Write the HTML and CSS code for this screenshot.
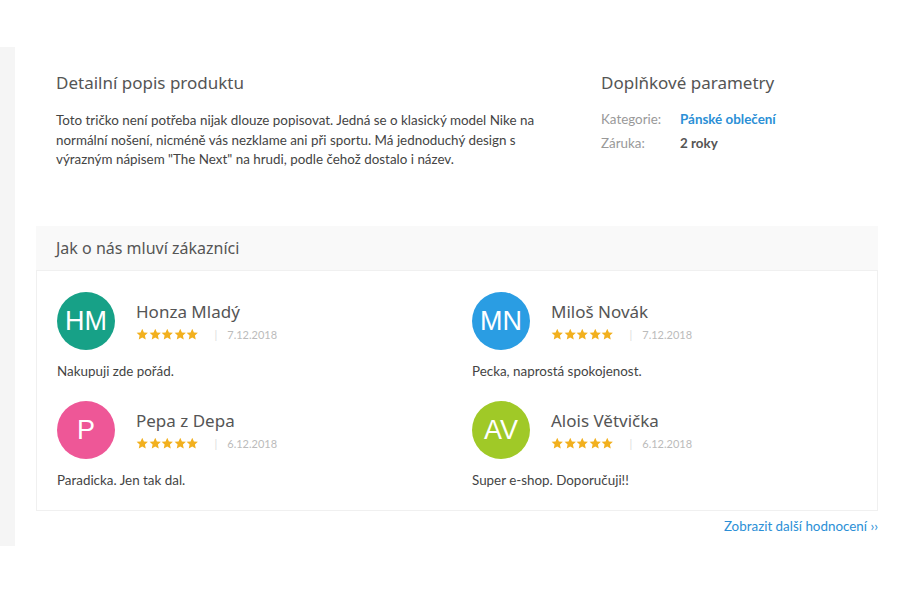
FILE: index.html
```html
<!doctype html>
<html lang="cs">
    <head>
        <meta charset="UTF-8" />
        <meta name="viewport" content="width=device-width, initial-scale=1.0" />
        <title>Detail produktu</title>
        <link rel="stylesheet" href="styles.css">
    </head>
    <body>
        <svg class="sprite" xmlns="http://www.w3.org/2000/svg">
            <symbol id="star" viewBox="0 0 24 24">
                <path d="M12 1.5l3.2 7 7.6.8-5.7 5.1 1.6 7.5L12 18l-6.7 3.9 1.6-7.5L1.2 9.3l7.6-.8z" />
            </symbol>
        </svg>

        <div class="page">
            <div class="sidebar"></div>

            <main class="content">
                <!-- Product description -->
                <section class="details">
                    <div class="description">
                        <h2>Detailní popis produktu</h2>
                        <p>
                            Toto tričko není potřeba nijak dlouze popisovat. Jedná se o klasický model Nike na
                            normální nošení, nicméně vás nezklame ani při sportu. Má jednoduchý design s
                            výrazným nápisem "The Next" na hrudi, podle čehož dostalo i název.
                        </p>
                    </div>

                    <div class="params">
                        <h2>Doplňkové parametry</h2>
                        <dl>
                            <dt>Kategorie:</dt>
                            <dd><a href="#">Pánské oblečení</a></dd>
                            <dt>Záruka:</dt>
                            <dd>2 roky</dd>
                        </dl>
                    </div>
                </section>

                <!-- Reviews -->
                <section class="reviews">
                    <div class="reviews-head">Jak o nás mluví zákazníci</div>
                    <div class="reviews-body">
                        <div class="review">
                            <div class="review-top">
                                <div class="avatar teal">HM</div>
                                <div class="meta">
                                    <div class="name">Honza Mladý</div>
                                    <div class="rating">
                                        <span class="stars"><svg><use href="#star" /></svg><svg><use href="#star" /></svg><svg><use href="#star" /></svg><svg><use href="#star" /></svg><svg><use href="#star" /></svg></span>
                                        <span class="sep">|</span>
                                        <span class="date">7.12.2018</span>
                                    </div>
                                </div>
                            </div>
                            <p>Nakupuji zde pořád.</p>
                        </div>

                        <div class="review">
                            <div class="review-top">
                                <div class="avatar blue">MN</div>
                                <div class="meta">
                                    <div class="name">Miloš Novák</div>
                                    <div class="rating">
                                        <span class="stars"><svg><use href="#star" /></svg><svg><use href="#star" /></svg><svg><use href="#star" /></svg><svg><use href="#star" /></svg><svg><use href="#star" /></svg></span>
                                        <span class="sep">|</span>
                                        <span class="date">7.12.2018</span>
                                    </div>
                                </div>
                            </div>
                            <p>Pecka, naprostá spokojenost.</p>
                        </div>

                        <div class="review">
                            <div class="review-top">
                                <div class="avatar pink">P</div>
                                <div class="meta">
                                    <div class="name">Pepa z Depa</div>
                                    <div class="rating">
                                        <span class="stars"><svg><use href="#star" /></svg><svg><use href="#star" /></svg><svg><use href="#star" /></svg><svg><use href="#star" /></svg><svg><use href="#star" /></svg></span>
                                        <span class="sep">|</span>
                                        <span class="date">6.12.2018</span>
                                    </div>
                                </div>
                            </div>
                            <p>Paradicka. Jen tak dal.</p>
                        </div>

                        <div class="review">
                            <div class="review-top">
                                <div class="avatar lime">AV</div>
                                <div class="meta">
                                    <div class="name">Alois Větvička</div>
                                    <div class="rating">
                                        <span class="stars"><svg><use href="#star" /></svg><svg><use href="#star" /></svg><svg><use href="#star" /></svg><svg><use href="#star" /></svg><svg><use href="#star" /></svg></span>
                                        <span class="sep">|</span>
                                        <span class="date">6.12.2018</span>
                                    </div>
                                </div>
                            </div>
                            <p>Super e-shop. Doporučuji!!</p>
                        </div>
                    </div>
                    <div class="more">
                        <a href="#">Zobrazit další hodnocení ››</a>
                    </div>
                </section>
            </main>
        </div>
    </body>
</html>
```

FILE: styles.css
```css
body {
    margin: 0;
    padding: 0;
    background-color: #fff;
    font-family: Lato, "Open Sans", sans-serif;
    color: #444;
}

.sprite {
    display: none;
}

.page {
    display: flex;
    margin-top: 47px;
}

/* Grey strip on the left edge */
.sidebar {
    width: 15px;
    height: 499px;
    background-color: #f5f5f5;
}

.content {
    flex: 1;
    padding: 0 22px 0 21px;
}

h2 {
    margin: 0;
    font-family: "Noto Sans", sans-serif;
    font-weight: normal;
    font-size: 17px;
    color: #555;
}

/* Product description + parameters */
.details {
    display: grid;
    grid-template-columns: 490px 1fr;
    column-gap: 55px;
    padding: 24px 20px 0 20px;
    height: 155px;
}

.description p {
    margin: 17px 0 0 0;
    font-size: 13.4px;
    line-height: 19.5px;
    color: #444;
}

.params dl {
    display: grid;
    grid-template-columns: 79px 1fr;
    row-gap: 6px;
    margin: 16px 0 0 0;
    font-size: 13.4px;
    line-height: 18px;
}

.params dt {
    color: #999;
}

.params dd {
    margin: 0;
    font-weight: bold;
    color: #555;
}

.params a {
    color: #2b8fd6;
    text-decoration: none;
}

/* Reviews */
.reviews-head {
    height: 44px;
    line-height: 44px;
    padding: 0 20px;
    background-color: #f9f9f9;
    font-family: "Noto Sans", sans-serif;
    font-size: 16px;
    color: #555;
}

.reviews-body {
    display: grid;
    grid-template-columns: 1fr 1fr;
    column-gap: 30px;
    row-gap: 21px;
    padding: 21px 20px 21px 20px;
    border: 1px solid #f0f0f0;
}

.review-top {
    display: flex;
    align-items: center;
    gap: 21px;
}

.avatar {
    width: 58px;
    height: 58px;
    border-radius: 50%;
    display: flex;
    align-items: center;
    justify-content: center;
    font-family: "Liberation Sans", Arial, sans-serif;
    font-size: 27px;
    color: #fff;
}

.teal {
    background-color: #17a187;
}

.blue {
    background-color: #2a9de3;
}

.pink {
    background-color: #ee5797;
}

.lime {
    background-color: #a0c927;
}

.name {
    font-family: "Noto Sans", sans-serif;
    font-size: 17px;
    line-height: 22px;
    color: #555;
}

.rating {
    display: flex;
    align-items: center;
    margin-top: 4px;
    height: 14px;
    font-size: 11px;
}

.stars {
    display: flex;
}

.stars svg {
    width: 12.5px;
    height: 12.5px;
    fill: #f2b01e;
}

.sep {
    margin: 0 10px 0 16px;
    color: #ddd;
}

.date {
    color: #bbb;
}

.review p {
    margin: 12px 0 0 0;
    font-size: 13.4px;
    line-height: 18px;
    color: #444;
}

.more {
    padding-top: 7px;
    text-align: right;
    font-size: 13.4px;
}

.more a {
    color: #2b8fd6;
    text-decoration: none;
}
```
